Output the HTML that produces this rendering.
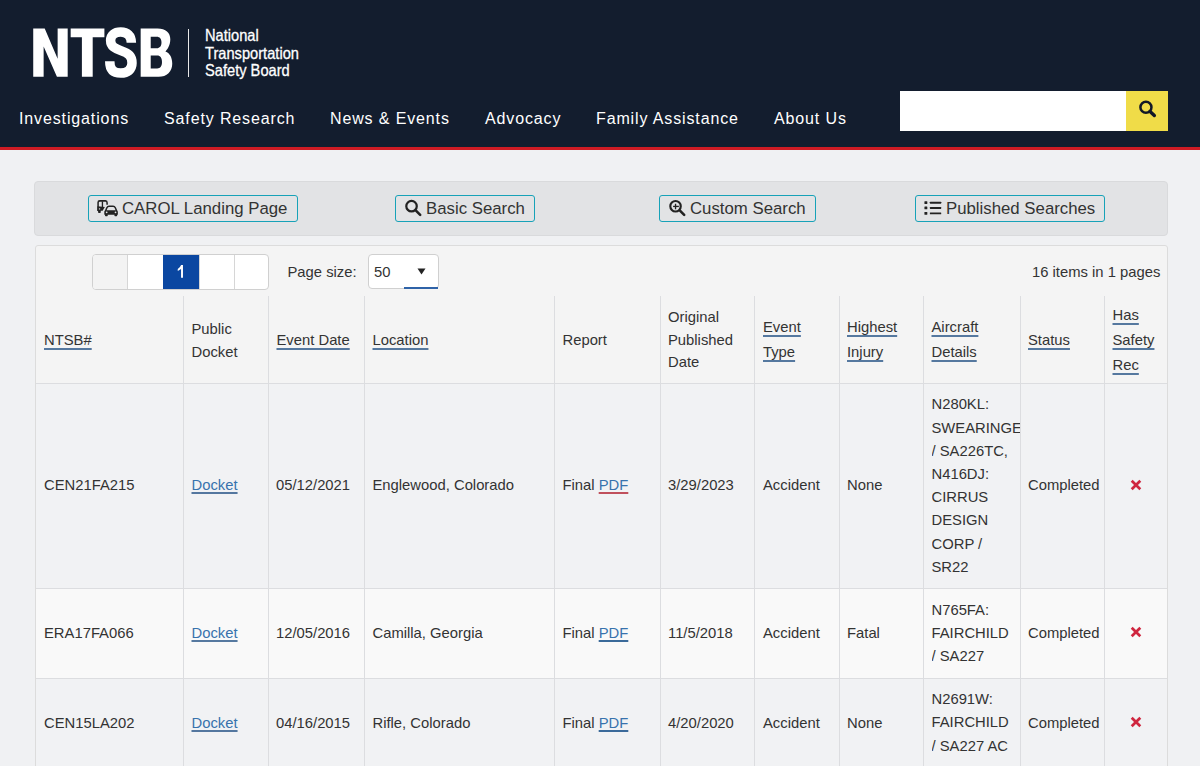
<!DOCTYPE html>
<html><head><meta charset="utf-8"><style>
*{box-sizing:border-box;margin:0;padding:0}
html,body{width:1200px;height:766px;overflow:hidden}
body{background:#f0f1f3;font-family:"Liberation Sans",sans-serif;color:#333;position:relative}
.a{position:absolute}
.hdr{position:absolute;left:0;top:0;width:1200px;height:147px;background:#131d2e}
.redline{position:absolute;left:0;top:147px;width:1200px;height:2.6px;background:#cf1b24}
.logo{position:absolute;top:13.5px;color:#fff;font-weight:bold;font-size:64.5px;line-height:80px;transform-origin:0 0;-webkit-text-stroke:3.5px #fff}
.bar{position:absolute;left:187.5px;top:29px;width:1.6px;height:48px;background:#e8e8e8}
.tag{position:absolute;left:205px;top:27.3px;color:#fff;font-size:16.5px;line-height:17.4px;transform:scaleX(0.888);transform-origin:0 0;white-space:nowrap;-webkit-text-stroke:0.3px #fff}
.nav{position:absolute;top:107.6px;color:#fff;font-size:16px;letter-spacing:0.87px;line-height:22px;white-space:nowrap}
.search{position:absolute;left:900px;top:91px;width:226px;height:40px;background:#fff}
.sbtn{position:absolute;left:1126px;top:91px;width:42px;height:40px;background:#f0dc48}
.panel1{position:absolute;left:34px;top:181px;width:1134px;height:55px;background:#e2e3e5;border:1px solid #d9dadc;border-radius:4px}
.btn{position:absolute;top:195px;height:27px;border:1.3px solid #17a2b8;border-radius:3px;font-size:16.8px;line-height:25px;color:#333;white-space:nowrap}
.grid{position:absolute;left:35px;top:245px;width:1133px;height:560px;background:#f4f4f4;border:1px solid #dcdcdc;border-radius:3px}
.pager{position:absolute;left:92px;top:254px;width:177px;height:36px;border:1px solid #d0d0d0;border-radius:4px;overflow:hidden;background:#fff}
.pager div{position:absolute;top:0;height:34px;border-left:1px solid #d6d6d6}
.t{position:absolute;font-size:14.8px;line-height:23px;white-space:nowrap;color:#333}
.u{border-bottom:2px solid #3b6a9a;padding-bottom:1px}
.lnk{color:#3872ad}
.lu{text-decoration:underline;text-decoration-color:rgba(40,85,135,0.78);text-underline-offset:3px;text-decoration-thickness:2px}
.vl{position:absolute;width:1px;background:#dcdde0;top:296px;height:470px}
.hl{position:absolute;height:1px;background:#dcdde0;left:36px;width:1131px}
.row{position:absolute;left:36px;width:1131px}
.clip{position:absolute;overflow:hidden}
</style></head><body>
<div class="hdr"></div><div class="redline"></div>
<svg class="a" style="left:0;top:0" width="200" height="100" viewBox="0 0 200 100">
<polygon fill="#fff" points="33.23,76.83 33.23,28.59 44.72,28.59 57.64,58.74 57.64,28.59 67.69,28.59 67.69,76.83 56.92,76.83 43.64,46.54 43.64,76.83"/>
<polygon fill="#fff" points="70.67,28.6 104.4,28.6 104.4,37.2 92.7,37.2 92.7,76.83 81.9,76.83 81.9,37.2 70.67,37.2"/>
<g transform="translate(101,25) scale(0.07178750897343862)"><path fill="none" stroke="#fff" stroke-width="132" d="M423,248 C423,145 365,98 275,98 C185,98 134,143 134,215 C134,300 200,330 285,360 C385,395 432,435 432,530 C432,622 370,670 275,670 C175,670 122,622 122,505"/></g>
<g transform="translate(136,25) scale(0.07178750897343862)"><path fill="#fff" fill-rule="evenodd" d="M65,50 L300,50 C415,50 478,110 478,200 C478,290 430,350 410,370 C475,395 505,460 505,540 C505,650 430,722 315,722 L65,722 Z M205,165 L290,165 C330,165 355,195 355,245 C355,295 330,325 290,325 L205,325 Z M205,425 L295,425 C340,425 362,460 362,515 C362,570 340,605 295,605 L205,605 Z"/></g>
</svg><div class="bar"></div>
<div class="tag">National<br>Transportation<br>Safety Board</div>
<div class="nav" style="left:19px">Investigations</div>
<div class="nav" style="left:164px">Safety Research</div>
<div class="nav" style="left:330px">News &amp; Events</div>
<div class="nav" style="left:485px">Advocacy</div>
<div class="nav" style="left:596px">Family Assistance</div>
<div class="nav" style="left:774px">About Us</div>
<div class="search"></div>
<div class="sbtn"></div>
<svg class="a" style="left:1120px;top:88px" width="52" height="46" viewBox="0 0 866 766"><circle cx="432" cy="320" r="92" fill="none" stroke="#111827" stroke-width="42"/><line x1="500" y1="390" x2="572" y2="458" stroke="#111827" stroke-width="56" stroke-linecap="round"/></svg>
<div class="panel1"></div>
<div class="btn" style="left:88px;width:210px;padding-left:33px">CAROL Landing Page</div>
<div class="btn" style="left:395px;width:140px;padding-left:30px">Basic Search</div>
<div class="btn" style="left:659px;width:157px;padding-left:30px">Custom Search</div>
<div class="btn" style="left:915px;width:190px;padding-left:30px">Published Searches</div>
<svg class="a" style="left:86px;top:192px" width="40" height="34" viewBox="0 0 901 766">
<path d="M272,430 L272,235 Q272,200 310,200 L440,200 Q475,200 475,240 L475,285" stroke="#222" stroke-width="34" fill="none"/>
<rect x="355" y="210" width="30" height="130" fill="#222"/>
<path d="M256,322 L425,340 L375,425 L256,425 Z" fill="#222"/>
<circle cx="305" cy="385" r="17" fill="#e2e3e5"/>
<rect x="272" y="400" width="60" height="72" rx="18" fill="#222"/>
<path d="M440,430 L470,355 Q485,322 520,322 L610,322 Q645,322 660,355 L690,430" stroke="#222" stroke-width="34" fill="none"/>
<path d="M412,445 Q412,410 447,410 L683,410 Q718,410 718,445 L718,515 L412,515 Z" fill="#222"/>
<circle cx="465" cy="457" r="20" fill="#e2e3e5"/><circle cx="665" cy="457" r="20" fill="#e2e3e5"/>
<rect x="428" y="495" width="62" height="52" rx="16" fill="#222"/><rect x="640" y="495" width="62" height="52" rx="16" fill="#222"/>
</svg>
<svg class="a" style="left:392px;top:192px" width="40" height="34" viewBox="0 0 901 766">
<circle cx="440" cy="320" r="118" fill="none" stroke="#222" stroke-width="50"/>
<line x1="545" y1="425" x2="635" y2="515" stroke="#222" stroke-width="58" stroke-linecap="round"/>
</svg>
<svg class="a" style="left:656px;top:192px" width="40" height="34" viewBox="0 0 901 766">
<circle cx="440" cy="320" r="118" fill="none" stroke="#222" stroke-width="48"/>
<line x1="545" y1="425" x2="635" y2="515" stroke="#222" stroke-width="58" stroke-linecap="round"/>
<line x1="385" y1="325" x2="515" y2="325" stroke="#222" stroke-width="30"/>
<line x1="440" y1="265" x2="440" y2="390" stroke="#222" stroke-width="30"/>
</svg>
<svg class="a" style="left:912px;top:192px" width="40" height="34" viewBox="0 0 901 766">
<rect x="280" y="208" width="65" height="62" rx="12" fill="#222"/>
<rect x="280" y="328" width="65" height="62" rx="12" fill="#222"/>
<rect x="280" y="450" width="65" height="62" rx="12" fill="#222"/>
<rect x="403" y="220" width="255" height="44" rx="10" fill="#222"/>
<rect x="403" y="340" width="255" height="44" rx="10" fill="#222"/>
<rect x="403" y="460" width="255" height="44" rx="10" fill="#222"/>
</svg>
<div class="grid"></div>
<div class="pager">
 <div style="left:0;width:35px;border-left:none;background:#f3f3f3"></div>
 <div style="left:34px;width:36px"></div>
 <div style="left:70px;top:-1px;width:36px;height:36px;background:#0b47a1;border-left:none"></div>
 <div style="left:106px;width:36px"></div>
 <div style="left:141px;width:36px"></div>
</div>
<svg class="a" style="left:160px;top:252px" width="40" height="40" viewBox="0 0 766 766"><path d="M404,250 L440,250 L440,492 L403,492 L403,325 Q375,348 340,362 L340,325 Q385,302 404,250 Z" fill="#fff"/></svg>
<div class="t " style="left:287.5px;top:260.80px;">Page size:</div>
<div class="a" style="left:368px;top:254px;width:70.5px;height:35px;background:#fff;border:1px solid #d0d0d0;border-radius:4px"></div>
<div class="t " style="left:374px;top:260.80px;">50</div>
<svg class="a" style="left:417px;top:268px" width="9" height="7" viewBox="0 0 9 7"><path d="M0.5,0.5 L8.5,0.5 L4.5,6.5 Z" fill="#222"/></svg>
<div class="a" style="left:404px;top:287px;width:34px;height:2px;background:#2f63a8"></div>
<div class="t " style="left:1032px;top:260.80px;">16 items in 1 pages</div>
<div class="row" style="top:383px;height:205px;background:#f1f2f4"></div>
<div class="row" style="top:588px;height:90px;background:#f9f9f9"></div>
<div class="row" style="top:678px;height:122px;background:#f1f2f4"></div>
<div class="row" style="top:296px;height:87px;background:#f4f4f4"></div>
<div class="vl" style="left:183.0px"></div>
<div class="vl" style="left:267.5px"></div>
<div class="vl" style="left:364.0px"></div>
<div class="vl" style="left:554.0px"></div>
<div class="vl" style="left:659.5px"></div>
<div class="vl" style="left:754.0px"></div>
<div class="vl" style="left:838.5px"></div>
<div class="vl" style="left:923.0px"></div>
<div class="vl" style="left:1019.5px"></div>
<div class="vl" style="left:1104.0px"></div>
<div class="hl" style="top:382.5px"></div>
<div class="hl" style="top:587.5px"></div>
<div class="hl" style="top:677.5px"></div>
<div class="t " style="left:44px;top:329.00px;"><span class="lu">NTSB#</span></div>
<div class="t " style="left:191.5px;top:317.60px;">Public</div>
<div class="t " style="left:191.5px;top:340.60px;">Docket</div>
<div class="t " style="left:276.5px;top:329.00px;"><span class="lu">Event Date</span></div>
<div class="t " style="left:372.5px;top:329.00px;"><span class="lu">Location</span></div>
<div class="t " style="left:562.5px;top:329.00px;">Report</div>
<div class="t " style="left:668px;top:306.00px;">Original</div>
<div class="t " style="left:668px;top:328.70px;">Published</div>
<div class="t " style="left:668px;top:351.30px;">Date</div>
<div class="t " style="left:763px;top:316.40px;"><span class="lu">Event</span></div>
<div class="t " style="left:763px;top:341.30px;"><span class="lu">Type</span></div>
<div class="t " style="left:847px;top:316.40px;"><span class="lu">Highest</span></div>
<div class="t " style="left:847px;top:341.30px;"><span class="lu">Injury</span></div>
<div class="t " style="left:931.5px;top:316.40px;"><span class="lu">Aircraft</span></div>
<div class="t " style="left:931.5px;top:341.30px;"><span class="lu">Details</span></div>
<div class="t " style="left:1028px;top:329.00px;"><span class="lu">Status</span></div>
<div class="t " style="left:1112.5px;top:304.00px;"><span class="lu">Has</span></div>
<div class="t " style="left:1112.5px;top:329.00px;"><span class="lu">Safety</span></div>
<div class="t " style="left:1112.5px;top:354.00px;"><span class="lu">Rec</span></div>
<div class="t " style="left:44px;top:474.00px;">CEN21FA215</div>
<div class="t " style="left:191.5px;top:474.00px;"><span class="lnk lu" style="text-underline-offset:2px">Docket</span></div>
<div class="t " style="left:276px;top:474.00px;">05/12/2021</div>
<div class="t " style="left:372.5px;top:474.00px;">Englewood, Colorado</div>
<div class="t " style="left:562.5px;top:474.00px;">Final <span class="lnk lu" style="text-decoration-color:#c0505c;text-underline-offset:2px">PDF</span></div>
<div class="t " style="left:668px;top:474.00px;">3/29/2023</div>
<div class="t " style="left:763px;top:474.00px;">Accident</div>
<div class="t " style="left:847px;top:474.00px;">None</div>
<div class="clip" style="left:931.5px;top:290px;width:88px;height:400px"><div class="t" style="left:0;top:103.30px">N280KL:</div><div class="t" style="left:0;top:126.50px">SWEARINGEN</div><div class="t" style="left:0;top:149.70px">/ SA226TC,</div><div class="t" style="left:0;top:172.90px">N416DJ:</div><div class="t" style="left:0;top:196.10px">CIRRUS</div><div class="t" style="left:0;top:219.30px">DESIGN</div><div class="t" style="left:0;top:242.50px">CORP /</div><div class="t" style="left:0;top:265.70px">SR22</div></div>
<div class="t " style="left:1028px;top:474.00px;">Completed</div>
<svg class="a" style="left:1130.1px;top:478.5px" width="12" height="12" viewBox="0 0 12 12"><path d="M1.7,1.7 L10.3,10.3 M10.3,1.7 L1.7,10.3" stroke="#cf263f" stroke-width="2.7"/></svg>
<div class="t " style="left:44px;top:622.00px;">ERA17FA066</div>
<div class="t " style="left:191.5px;top:622.00px;"><span class="lnk lu" style="text-underline-offset:2px">Docket</span></div>
<div class="t " style="left:276px;top:622.00px;">12/05/2016</div>
<div class="t " style="left:372.5px;top:622.00px;">Camilla, Georgia</div>
<div class="t " style="left:562.5px;top:622.00px;">Final <span class="lnk lu" style="text-decoration-color:#3b6a9a;text-underline-offset:2px">PDF</span></div>
<div class="t " style="left:668px;top:622.00px;">11/5/2018</div>
<div class="t " style="left:763px;top:622.00px;">Accident</div>
<div class="t " style="left:847px;top:622.00px;">Fatal</div>
<div class="clip" style="left:931.5px;top:438px;width:88px;height:400px"><div class="t" style="left:0;top:160.60px">N765FA:</div><div class="t" style="left:0;top:183.75px">FAIRCHILD</div><div class="t" style="left:0;top:206.90px">/ SA227</div></div>
<div class="t " style="left:1028px;top:622.00px;">Completed</div>
<svg class="a" style="left:1130.1px;top:626.2px" width="12" height="12" viewBox="0 0 12 12"><path d="M1.7,1.7 L10.3,10.3 M10.3,1.7 L1.7,10.3" stroke="#cf263f" stroke-width="2.7"/></svg>
<div class="t " style="left:44px;top:712.00px;">CEN15LA202</div>
<div class="t " style="left:191.5px;top:712.00px;"><span class="lnk lu" style="text-underline-offset:2px">Docket</span></div>
<div class="t " style="left:276px;top:712.00px;">04/16/2015</div>
<div class="t " style="left:372.5px;top:712.00px;">Rifle, Colorado</div>
<div class="t " style="left:562.5px;top:712.00px;">Final <span class="lnk lu" style="text-decoration-color:#3b6a9a;text-underline-offset:2px">PDF</span></div>
<div class="t " style="left:668px;top:712.00px;">4/20/2020</div>
<div class="t " style="left:763px;top:712.00px;">Accident</div>
<div class="t " style="left:847px;top:712.00px;">None</div>
<div class="clip" style="left:931.5px;top:528px;width:88px;height:400px"><div class="t" style="left:0;top:160.30px">N2691W:</div><div class="t" style="left:0;top:183.45px">FAIRCHILD</div><div class="t" style="left:0;top:206.60px">/ SA227 AC</div></div>
<div class="t " style="left:1028px;top:712.00px;">Completed</div>
<svg class="a" style="left:1130.1px;top:716.2px" width="12" height="12" viewBox="0 0 12 12"><path d="M1.7,1.7 L10.3,10.3 M10.3,1.7 L1.7,10.3" stroke="#cf263f" stroke-width="2.7"/></svg>
</body></html>
